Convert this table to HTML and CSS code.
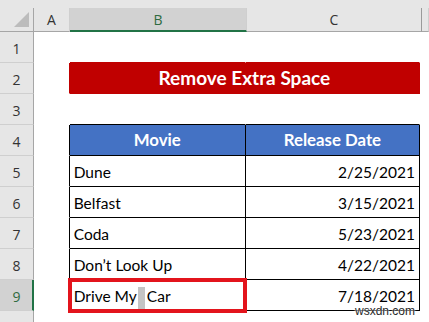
FILE: index.html
```html
<!DOCTYPE html>
<html>
<head>
<meta charset="utf-8">
<link rel="stylesheet" href="styles.css">
</head>
<body>
<div class="sheet">
  <div class="top"></div>
  <div class="colhead">
    <div class="corner"><svg width="16" height="16" viewBox="0 0 16 16"><polygon points="15,0 15,15 0,15" fill="#bcbcbc"/></svg></div>
    <div class="ch a">A</div>
    <div class="ch b sel">B</div>
    <div class="ch c">C</div>
    <div class="ch rest"></div>
  </div>
  <div class="row r1"><div class="rh">1</div><div class="cell a"></div><div class="cell b"></div><div class="cell c"></div><div class="cell rest"></div></div>
  <div class="row r2"><div class="rh">2</div><div class="cell a"></div><div class="cell title">Remove Extra Space</div><div class="cell rest"></div></div>
  <div class="row r3"><div class="rh">3</div><div class="cell a"></div><div class="cell b"></div><div class="cell c"></div><div class="cell rest"></div></div>
  <div class="row t head"><div class="rh">4</div><div class="cell a"></div><div class="cell b">Movie</div><div class="cell c">Release Date</div><div class="cell rest"></div></div>
  <div class="row t"><div class="rh">5</div><div class="cell a"></div><div class="cell b">Dune</div><div class="cell c">2/25/2021</div><div class="cell rest"></div></div>
  <div class="row t"><div class="rh">6</div><div class="cell a"></div><div class="cell b">Belfast</div><div class="cell c">3/15/2021</div><div class="cell rest"></div></div>
  <div class="row t"><div class="rh">7</div><div class="cell a"></div><div class="cell b">Coda</div><div class="cell c">5/23/2021</div><div class="cell rest"></div></div>
  <div class="row t"><div class="rh">8</div><div class="cell a"></div><div class="cell b">Don’t Look Up</div><div class="cell c">4/22/2021</div><div class="cell rest"></div></div>
  <div class="row t"><div class="rh sel">9</div><div class="cell a"></div><div class="cell b">Drive My<span class="hl"></span>Car</div><div class="cell c">7/18/2021</div><div class="cell rest"></div></div>
  <div class="row"><div class="rh"></div><div class="cell a"></div><div class="cell b"></div><div class="cell c"></div><div class="cell rest"></div></div>
  <div class="mark"></div>
  <div class="wm">wsxdn.com</div>
</div>
</body>
</html>
```
FILE: styles.css
```css
* { box-sizing: border-box; }
html, body { margin: 0; padding: 0; }
body { width: 429px; height: 322px; overflow: hidden; background: #fff; }
.sheet { position: relative; width: 429px; height: 322px; overflow: hidden; font-family: "Lato", "Liberation Sans", sans-serif; color: #000; }
.top { height: 8px; background: #e6e6e6; }
.colhead { display: flex; height: 24px; background: #e6e6e6; }
.colhead > div { border-bottom: 1px solid #a6a6a6; border-right: 1px solid #cfcfcf; display: flex; align-items: center; justify-content: center; font-family: "Open Sans", sans-serif; font-size: 14px; color: #333; }
.corner { width: 34px; align-items: flex-end !important; justify-content: flex-end !important; padding: 0 3px 3px 0; border-right-color: #a6a6a6 !important; }
.corner svg { display: block; }
.a { width: 36px; }
.b { width: 177px; }
.c { width: 175px; }
.rest { flex: 1; }
.ch.c { border-right-color: #9a9a9a !important; }
.ch.sel { background: #d2d2d2; color: #2f6b3f; border-bottom: 2px solid #217346 !important; }
.row { display: flex; height: 31px; }
.rh { width: 34px; background: #e6e6e6; border-right: 1px solid #a6a6a6; border-bottom: 1px solid #cfcfcf; display: flex; align-items: center; justify-content: center; font-family: "Open Sans", sans-serif; font-size: 14px; color: #333; padding-top: 2px; }
.rh.sel { background: #d2d2d2; color: #2f6b3f; border-right: 2px solid #217346; padding-left: 1px; }
.cell { border-right: 1px solid #fff; border-bottom: 1px solid #fff; display: flex; align-items: flex-end; font-size: 15.5px; line-height: 18px; padding: 0 4px 5px; white-space: nowrap; }
.r1 .b, .r1 .c { border-bottom-color: #c00000; }
.r2 .a { border-right-color: #c00000; }
.title { width: 352px; background: #c00000; border-right-color: #c00000; border-bottom-color: #c00000; color: #fff; font-weight: 700; font-size: 19px; line-height: 23px; justify-content: center; padding-bottom: 4px; }
.r3 .b, .r3 .c { border-bottom-color: #000; }
.t .a { border-right-color: #000; }
.t .b, .t .c { border-right-color: #000; border-bottom-color: #000; }
.t .c { justify-content: flex-end; padding-right: 4px; }
.head .b, .head .c { background: #4472c4; color: #fff; font-weight: 700; font-size: 16.8px; line-height: 20px; justify-content: center; padding-right: 4px; }
.hl { display: inline-block; width: 7px; height: 23px; background: #c4c4c4; margin: 0 2px -5px 1px; }
.mark { position: absolute; left: 68px; top: 278px; width: 179px; height: 35px; border: 4px solid #e3141c; }
.wm { position: absolute; left: 355px; top: 304px; font-family: "Liberation Sans", sans-serif; font-size: 12px; line-height: 14px; color: #2a2a2a; text-shadow: 0 0 2px #fff, 0 0 2px #fff; }
```
